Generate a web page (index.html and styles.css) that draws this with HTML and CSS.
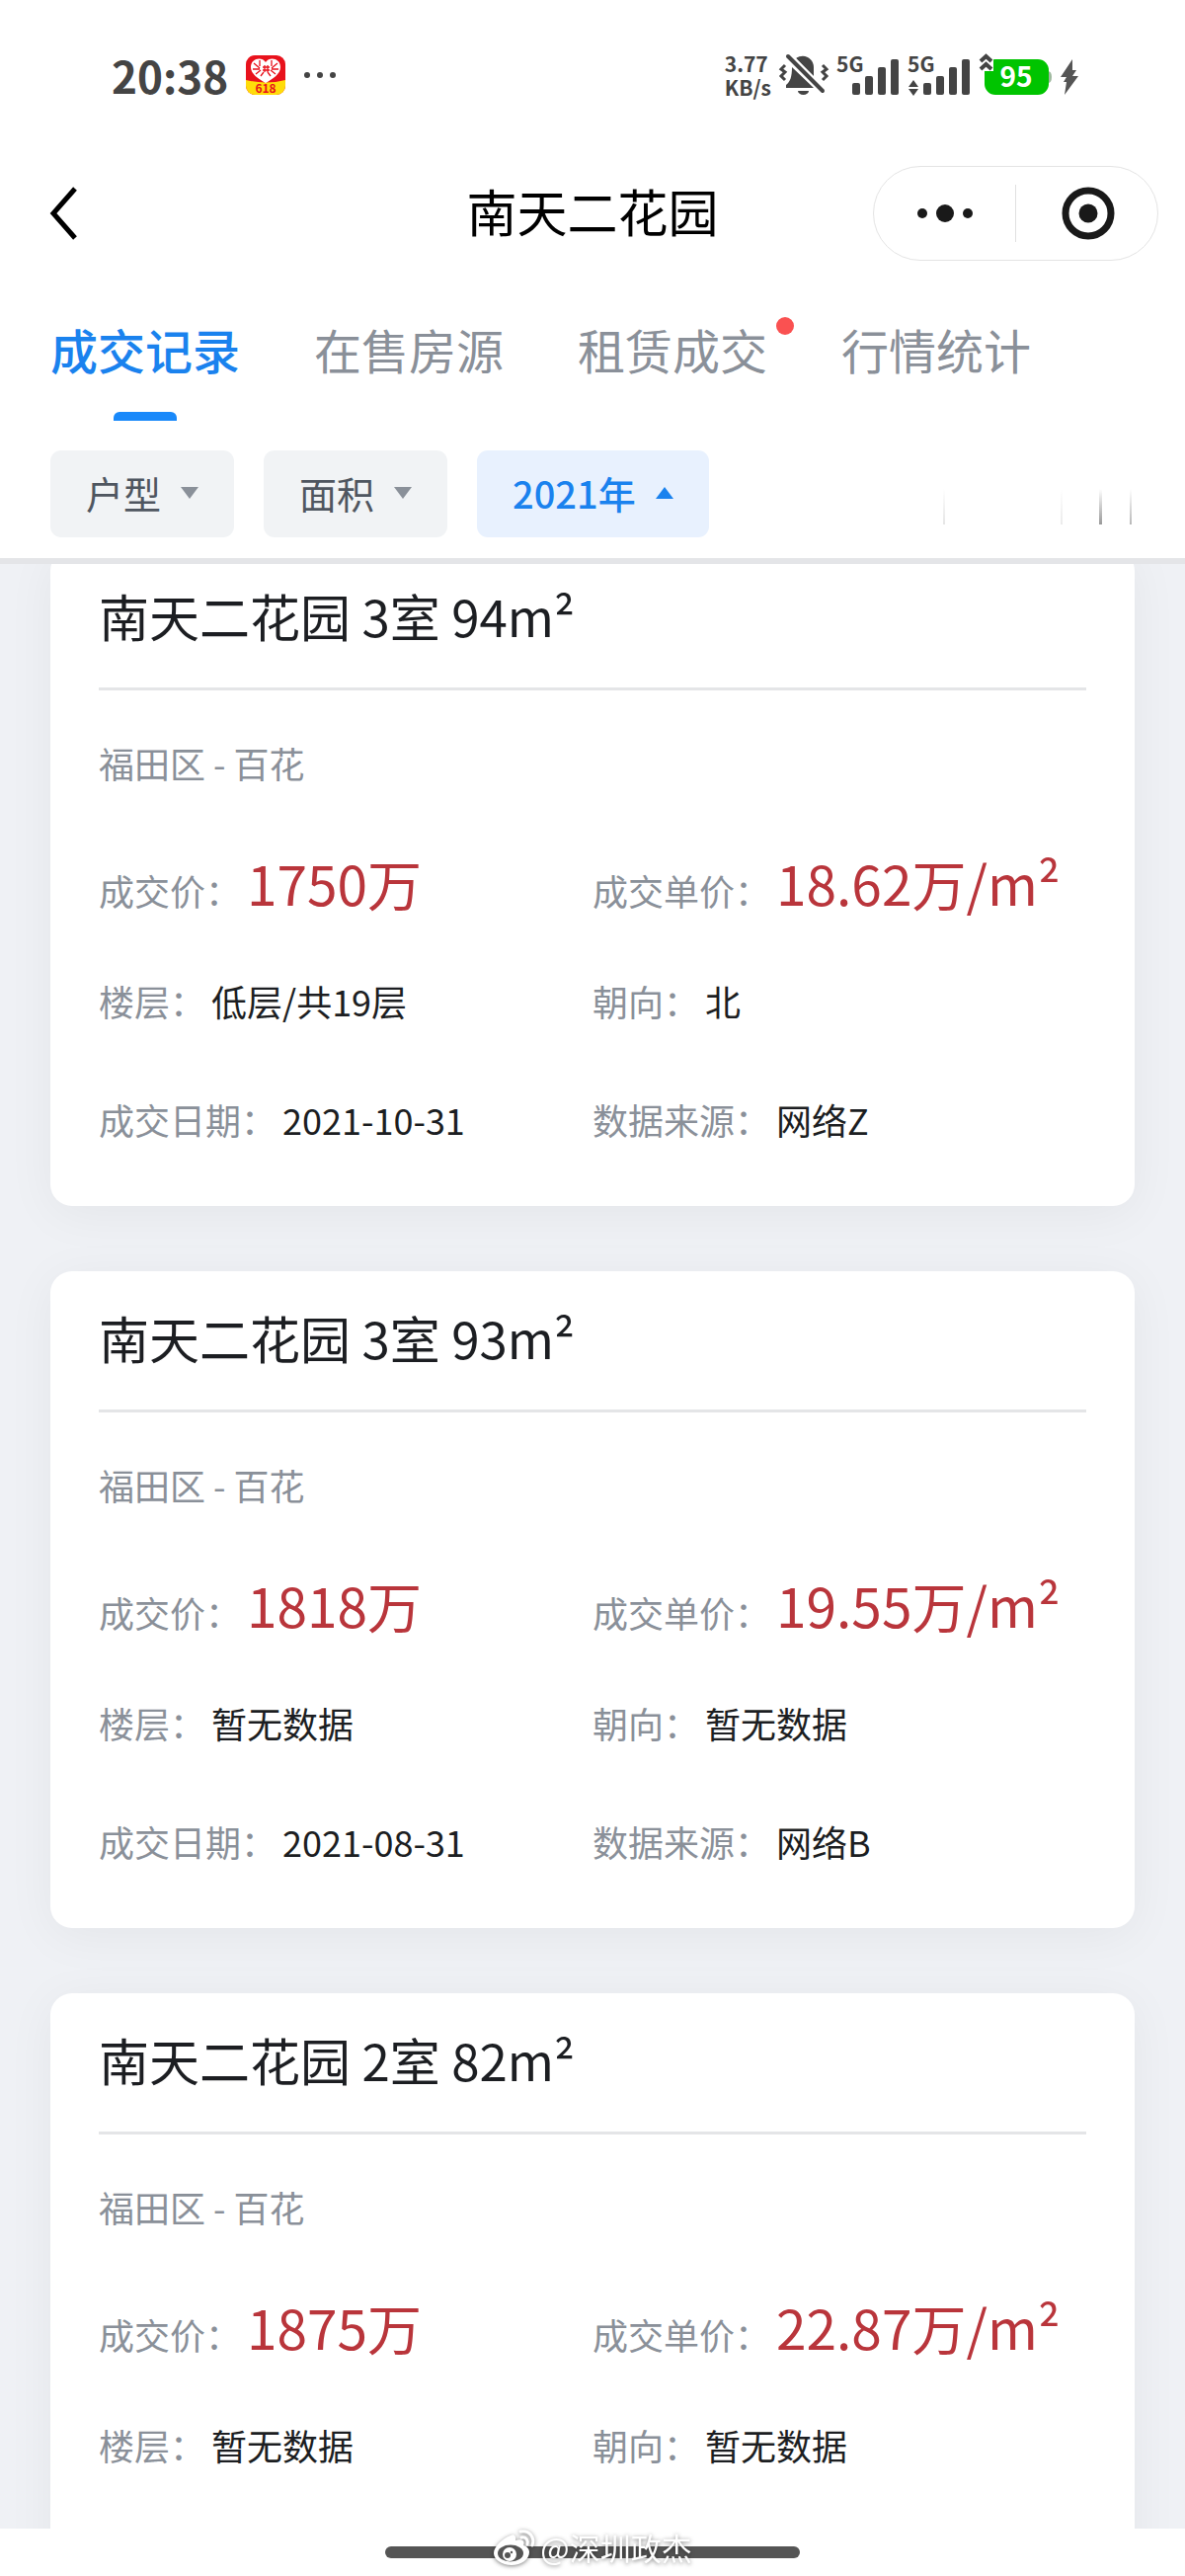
FILE: index.html
```html
<!DOCTYPE html>
<html lang="zh-CN">
<head>
  <meta charset="UTF-8">
  <meta name="viewport" content="width=device-width, initial-scale=1.0">
  <title>南天二花园</title>
  <link rel="stylesheet" href="styles.css">
</head>
<body>
  <header class="header">
    <!-- 状态栏 -->
    <div class="status-bar">
      <div class="status-left">
        <span class="time">20:38</span>
        <svg class="app-icon" width="40" height="40" viewBox="0 0 40 40">
          <defs><clipPath id="app-clip"><rect width="40" height="40" rx="9"/></clipPath></defs>
          <g clip-path="url(#app-clip)">
            <rect width="40" height="40" fill="#e8121c"/>
            <path d="M0 25Q20 30 40 25V40H0z" fill="#ffdc0a"/>
            <path d="M20 7C16 1 5 3 5 12c0 7 8 12 15 16 7-4 15-9 15-16 0-9-11-11-15-5z" fill="#fff"/>
            <path d="M8 8l6 5M7 14l7 0M10 19l5-4M14 5v6M15 21l3-4M32 8l-6 5M33 14l-7 0M30 19l-5-4M26 5v6M25 21l-3-4M17 12h7M17 15h7M19 10v7M22 10v7" stroke="#e8121c" stroke-width="1.3" fill="none"/>
            <text x="20" y="38" class="app-text">618</text>
          </g>
        </svg>
        <svg width="34" height="8" viewBox="0 0 34 8" fill="#444">
          <circle cx="4" cy="4" r="3"/><circle cx="17" cy="4" r="3"/><circle cx="30" cy="4" r="3"/>
        </svg>
      </div>
      <div class="status-right">
        <div class="speed"><span>3.77</span><span>KB/s</span></div>
        <svg width="50" height="44" viewBox="0 0 50 44" fill="#444">
          <path d="M17 5c9-6 18 1 18 9v10z"/>
          <path d="M13 14l22 21H7v-3c4-3 6-8 6-18z"/>
          <path d="M19 38h11a5.500 4 0 0 1-11 0z"/>
          <path d="M11 1l35 35" stroke="#fff" stroke-width="3"/>
          <path d="M9 3l35 35" stroke="#444" stroke-width="4" stroke-linecap="round"/>
          <path d="M6 12l-4 4 4 3-4 4 4 4M44 12l4 4-4 3 4 4-4 4" fill="none" stroke="#444" stroke-width="3"/>
        </svg>
        <svg width="64" height="44" viewBox="0 0 64 44" fill="#444">
          <text x="0" y="19" class="net-text">5G</text>
          <rect x="16" y="30" width="8" height="12" rx="2"/>
          <rect x="29" y="23" width="8" height="19" rx="2"/>
          <rect x="42" y="14" width="8" height="28" rx="2"/>
          <rect x="55" y="6" width="8" height="36" rx="2"/>
        </svg>
        <svg width="64" height="44" viewBox="0 0 64 44" fill="#444">
          <text x="0" y="19" class="net-text">5G</text>
          <path d="M1 34l5-7 5 7zM1 36l5 7 5-7z"/>
          <rect x="16" y="30" width="8" height="12" rx="2"/>
          <rect x="29" y="23" width="8" height="19" rx="2"/>
          <rect x="42" y="14" width="8" height="28" rx="2"/>
          <rect x="55" y="6" width="8" height="36" rx="2"/>
        </svg>
        <svg width="74" height="44" viewBox="0 0 74 44">
          <path d="M70 18q4 0 4 6t-4 6z" fill="#9fb99f"/>
          <rect x="6" y="6" width="65" height="36" rx="11" fill="#00c400"/>
          <path d="M0 0h15v18H5z" fill="#fff"/>
          <path d="M2 8l5.500-5L13 8M2 16l5.500-5 5.500 5" fill="none" stroke="#444" stroke-width="4"/>
          <text x="38" y="34" class="battery-text">95</text>
        </svg>
        <svg width="20" height="44" viewBox="0 0 20 44">
          <path d="M13 6L1 24h6l-3 5h3l-2 13 14-19h-6l4-6h-4z" fill="#555"/>
        </svg>
      </div>
    </div>

    <!-- 导航栏 -->
    <div class="nav-bar">
      <button class="back" aria-label="返回">
        <svg width="30" height="54" viewBox="0 0 30 54" fill="none" stroke="#000" stroke-width="5">
          <path d="M27 2L5 27l22 25"/>
        </svg>
      </button>
      <h1 class="nav-title">南天二花园</h1>
      <div class="capsule">
        <button class="capsule-btn" aria-label="更多">
          <svg width="58" height="20" viewBox="0 0 58 20" fill="#191919">
            <circle cx="6" cy="10" r="5"/><circle cx="29" cy="10" r="9"/><circle cx="52" cy="10" r="5"/>
          </svg>
        </button>
        <button class="capsule-btn" aria-label="关闭">
          <svg width="54" height="54" viewBox="0 0 54 54">
            <circle cx="28" cy="27" r="23" fill="none" stroke="#191919" stroke-width="7"/>
            <circle cx="28" cy="27" r="9.500" fill="#191919"/>
          </svg>
        </button>
      </div>
    </div>

    <nav class="tabs">
      <a class="tab active" href="#">成交记录</a>
      <a class="tab" href="#">在售房源</a>
      <a class="tab has-dot" href="#">租赁成交</a>
      <a class="tab" href="#">行情统计</a>
    </nav>

    <div class="filters">
      <button class="filter">户型<span class="arrow"></span></button>
      <button class="filter">面积<span class="arrow"></span></button>
      <button class="filter selected">2021年<span class="arrow up"></span></button>
      <svg class="ticks" width="194" height="36" viewBox="0 0 194 36">
        <defs>
          <linearGradient id="tick" x1="0" y1="0" x2="0" y2="1">
            <stop offset="0" stop-color="#fff"/><stop offset="1" stop-color="#999"/>
          </linearGradient>
        </defs>
        <g fill="url(#tick)">
          <rect x="0" y="0" width="2" height="36" opacity=".25"/>
          <rect x="119" y="0" width="2" height="36" opacity=".2"/>
          <rect x="158" y="0" width="3" height="36"/>
          <rect x="189" y="0" width="2" height="36" opacity=".7"/>
        </g>
      </svg>
    </div>
  </header>

  <main class="list">
    <article class="card">
      <h2 class="card-title">南天二花园 3室 94m²</h2>
      <p class="region">福田区 - 百花</p>
      <dl class="info">
        <div class="item price"><dt>成交价：</dt><dd>1750万</dd></div>
        <div class="item price"><dt>成交单价：</dt><dd>18.62万/m²</dd></div>
        <div class="item"><dt>楼层：</dt><dd>低层/共19层</dd></div>
        <div class="item"><dt>朝向：</dt><dd>北</dd></div>
        <div class="item"><dt>成交日期：</dt><dd>2021-10-31</dd></div>
        <div class="item"><dt>数据来源：</dt><dd>网络Z</dd></div>
      </dl>
    </article>

    <article class="card">
      <h2 class="card-title">南天二花园 3室 93m²</h2>
      <p class="region">福田区 - 百花</p>
      <dl class="info">
        <div class="item price"><dt>成交价：</dt><dd>1818万</dd></div>
        <div class="item price"><dt>成交单价：</dt><dd>19.55万/m²</dd></div>
        <div class="item"><dt>楼层：</dt><dd>暂无数据</dd></div>
        <div class="item"><dt>朝向：</dt><dd>暂无数据</dd></div>
        <div class="item"><dt>成交日期：</dt><dd>2021-08-31</dd></div>
        <div class="item"><dt>数据来源：</dt><dd>网络B</dd></div>
      </dl>
    </article>

    <article class="card">
      <h2 class="card-title">南天二花园 2室 82m²</h2>
      <p class="region">福田区 - 百花</p>
      <dl class="info">
        <div class="item price"><dt>成交价：</dt><dd>1875万</dd></div>
        <div class="item price"><dt>成交单价：</dt><dd>22.87万/m²</dd></div>
        <div class="item"><dt>楼层：</dt><dd>暂无数据</dd></div>
        <div class="item"><dt>朝向：</dt><dd>暂无数据</dd></div>
      </dl>
    </article>
  </main>

  <footer class="home-bar">
    <div class="home-line"></div>
    <div class="watermark">
      <svg width="44" height="38" viewBox="0 0 44 38">
        <path d="M18 7c3-2 6 0 5 5 6-2 10 0 8 5 4 1 6 4 6 7 0 7-8 13-18 13S1 31 1 25c0-7 9-15 17-18z" fill="#fff"/>
        <ellipse cx="18" cy="25" rx="13" ry="8.500" fill="#555"/>
        <circle cx="17" cy="26" r="7" fill="#fff"/>
        <circle cx="15" cy="27" r="3" fill="#555"/>
        <circle cx="19" cy="24" r="1.200" fill="#555"/>
        <path d="M28 3c9-2 15 6 12 14M29 9c5-1 7 3 6 7" fill="none" stroke="#fff" stroke-width="3" stroke-linecap="round"/>
      </svg>
      <span>@深圳政杰</span>
    </div>
  </footer>
</body>
</html>
```
FILE: styles.css
```css
/* Styles généraux */
* {
  box-sizing: border-box;
  margin: 0;
  padding: 0;
}

body {
  font-family: "Noto Sans CJK SC", sans-serif;
  background: #fff;
  color: #1c1e22;
  display: flex;
  flex-direction: column;
  height: 100vh;
}

button {
  border: none;
  background: none;
  font-family: inherit;
  cursor: pointer;
}

svg {
  display: block;
  flex: none;
  overflow: visible;
}

.header {
  padding-bottom: 21px;
  border-bottom: 6px solid #e4e5e8;
}

/* 状态栏 */
.status-bar {
  display: flex;
  justify-content: space-between;
  align-items: center;
  height: 152px;
  padding: 0 107px 0 113px;
  color: #444;
}

.status-left,
.status-right {
  display: flex;
  align-items: center;
}

.status-left {
  gap: 18px;
}

.status-right {
  gap: 8px;
}

.time {
  font-size: 44px;
  font-weight: 700;
  line-height: 48px;
}

.speed {
  display: flex;
  flex-direction: column;
  font-size: 21px;
  font-weight: 700;
  line-height: 24px;
}

.app-text {
  font-size: 12px;
  font-weight: 700;
  fill: #e8121c;
  text-anchor: middle;
}

.net-text {
  font-size: 21px;
  font-weight: 700;
}

.battery-text {
  font-size: 28px;
  font-weight: 700;
  fill: #fff;
  text-anchor: middle;
}

/* 导航栏 */
.nav-bar {
  display: grid;
  grid-template-columns: 1fr auto 1fr;
  align-items: center;
  height: 128px;
  padding: 0 27px;
}

.back {
  justify-self: start;
  margin-left: 22px;
}

.nav-title {
  padding-bottom: 6px;
  font-size: 51px;
  font-weight: 400;
  line-height: 60px;
  color: #000;
}

.capsule {
  display: flex;
  justify-self: end;
  align-items: center;
  width: 289px;
  height: 96px;
  border: 1px solid #e4e4e4;
  border-radius: 48px;
}

.capsule-btn {
  display: flex;
  flex: 1;
  justify-content: center;
  align-items: center;
  height: 58px;
}

.capsule-btn + .capsule-btn {
  border-left: 1px solid #e0e0e0;
}

/* 标签页 */
.tabs {
  display: flex;
  gap: 75px;
  padding: 0 51px;
}

.tab {
  position: relative;
  height: 146px;
  font-size: 48px;
  line-height: 147px;
  color: #8a9099;
  text-decoration: none;
}

.tab.active {
  color: #1a82ee;
  font-weight: 500;
}

.tab.active::after {
  content: "";
  position: absolute;
  bottom: 0;
  left: 50%;
  width: 64px;
  height: 9px;
  margin-left: -32px;
  border-radius: 6px 6px 0 0;
  background: #1989fa;
}

.tab.has-dot::after {
  content: "";
  position: absolute;
  top: 41px;
  right: -27px;
  width: 18px;
  height: 18px;
  border-radius: 50%;
  background: #fa5151;
}

/* 筛选 */
.filters {
  display: flex;
  align-items: center;
  gap: 30px;
  padding: 30px 51px 0;
}

.filter {
  display: flex;
  align-items: center;
  gap: 20px;
  height: 88px;
  padding: 0 36px 3px;
  border-radius: 11px;
  background: #f1f3f5;
  color: #4f5660;
  font-size: 38px;
}

.filter.selected {
  background: #e8f1fe;
  color: #1a82ee;
  font-weight: 500;
}

.arrow {
  border: 9px solid transparent;
  border-top: 12px solid #8a9099;
  border-bottom: none;
}

.arrow.up {
  border-top: none;
  border-bottom: 12px solid #1a82ee;
}

.ticks {
  margin-left: auto;
  margin-top: 26px;
}

/* 成交列表 */
.list {
  flex: 1;
  min-height: 0;
  overflow-y: auto;
  scrollbar-width: none;
  padding: 0 51px;
  background: #eff1f5;
}

.card {
  min-height: 665px;
  margin-bottom: 66px;
  padding: 0 49px 28px;
  border-radius: 22px;
  background: #fff;
  box-shadow: 0 8px 50px rgba(0, 0, 0, 0.05);
}

/* 首张卡片已滚动到标题栏下方 */
.card:first-child {
  margin-top: -15px;
}

.card-title {
  padding-bottom: 6px;
  border-bottom: 3px solid #e4e5e7;
  font-size: 51px;
  font-weight: 400;
  line-height: 134px;
}

.region {
  padding-top: 12px;
  font-size: 36px;
  line-height: 122px;
  color: #8a9099;
}

.info {
  display: grid;
  grid-template-columns: 1fr 1fr;
}

.item {
  display: flex;
  align-items: baseline;
  gap: 6px;
  height: 120px;
  font-size: 36px;
  line-height: 120px;
  white-space: nowrap;
}

.item dt {
  color: #8a9099;
}

.item.price dd {
  font-size: 55px;
  color: #b9353b;
}

/* 底部 */
.home-bar {
  position: relative;
  display: flex;
  justify-content: center;
  height: 48px;
  padding-top: 18px;
}

.home-line {
  width: 420px;
  height: 12px;
  border-radius: 6px;
  background: #555;
}

.watermark {
  position: absolute;
  top: 0;
  display: flex;
  align-items: center;
  gap: 4px;
  color: #fff;
  font-size: 31px;
  line-height: 38px;
  filter: drop-shadow(0 1px 2px rgba(0, 0, 0, 0.5));
}
```
